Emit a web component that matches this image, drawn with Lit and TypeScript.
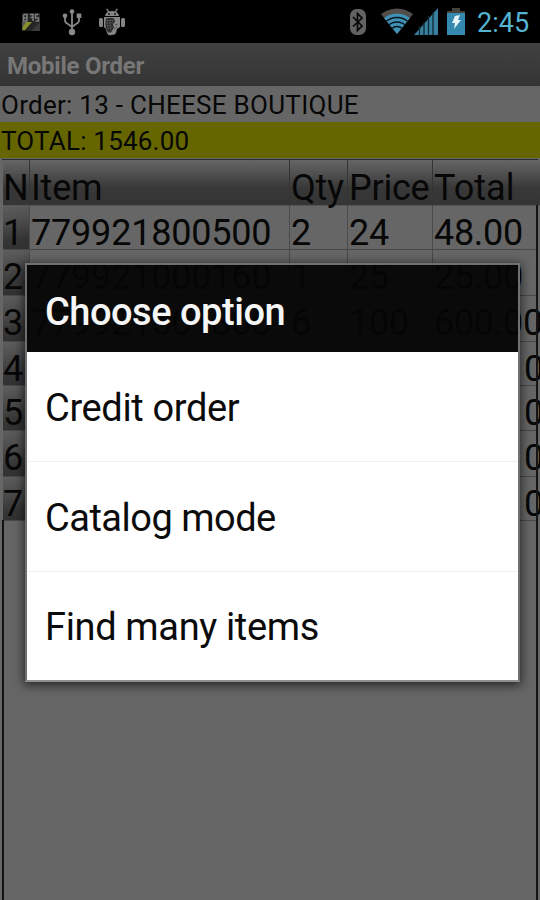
import { LitElement, html, css } from "lit";
import { customElement } from "lit/decorators.js";

interface Row { n: string; item: string; qty: string; price: string; total: string; tail?: boolean }

const ROWS: Row[] = [
  { n: "1", item: "779921800500", qty: "2", price: "24", total: "48.00" },
  { n: "2", item: "779921000160", qty: "1", price: "25", total: "25.00" },
  { n: "3", item: "779921501800", qty: "6", price: "100", total: "600.00" },
  { n: "4", item: "", qty: "", price: "", total: "0", tail: true },
  { n: "5", item: "", qty: "", price: "", total: "0", tail: true },
  { n: "6", item: "", qty: "", price: "", total: "0", tail: true },
  { n: "7", item: "", qty: "", price: "", total: "0", tail: true },
];

@customElement("status-bar")
class StatusBar extends LitElement {
  static styles = css`
    :host { display: flex; height: 43px; background: #000; align-items: center; box-sizing: border-box; }
    svg { display: block; flex: none; }
    .note { margin-left: 21px; }
    .usb { margin-left: 21px; }
    .bot { margin-left: 17px; }
    .gap { flex: 1; }
    .wifi { margin-left: 13px; }
    .cell { margin-left: 0; }
    .batt { margin-left: 9px; }
    .time { font: 27px/43px Roboto, sans-serif; color: #54b4d3; width: 53px; margin: 3px 10px 0 12px; white-space: nowrap; }
  `;
  render() {
    return html`
      <svg class="note" width="20" height="20" viewBox="0 0 20 20">
        <rect x="1" y="1" width="18" height="18" fill="#252525"/>
        <path d="M10 19l9-9v9z" fill="#3a3a3a"/>
        <path d="M3 10h8l-7 8H1z" fill="#87902d"/><path d="M1 10h4l-4 6z" fill="#555"/>
        <path d="M2.500 2.500v6.500h3.500V6H3M3 2.500h3V6M9 2.500h3V9M12 5.500H9.500M17.500 2.500h-3v3.500h3V9h-3" fill="none" stroke="#7c7c7c" stroke-width="1.500"/>
      </svg>
      <svg class="usb" width="20" height="28" viewBox="0 0 20 28">
        <g fill="none" stroke="#8a8a8a" stroke-width="1.800"><path d="M10 4v20M3 8v4q0 3 3 4l4 3M17 8v4q0 3-3 4l-4 3"/></g>
        <g fill="#8a8a8a"><circle cx="10" cy="3.500" r="2.300"/><circle cx="10" cy="24" r="3.200"/><circle cx="3" cy="7.800" r="2.300"/><rect x="14.700" y="5.500" width="4.600" height="4.500"/></g>
      </svg>
      <svg class="bot" width="26" height="28" viewBox="0 0 26 28">
        <g fill="#858585">
          <path d="M6 8q1-5 7-5t7 5zM7 1l1.200-.6 2 3-1.200.8zM19 1l-1.200-.6-2 3 1.200.8z"/>
          <rect x="0" y="10" width="4" height="9" rx="1.500"/><rect x="22" y="10" width="4" height="9" rx="1.500"/>
          <path d="M5 9h16v10l-3 2-1 4q-1 2-4 2-4 1-5-2l-1-4-2-2z"/>
        </g>
        <path d="M7 10.500q5-1.500 8 0l1 3-2 3 1 3-3 5H9q-4-6-2-14z" fill="#303030"/>
        <path d="M8 12.500h6M7.500 15h6M8 17.500h5M8.500 20h4" stroke="#707070" stroke-dasharray="1.300 1.300"/>
        <path d="M16 17l3-1M15 21l3-2" stroke="#555"/>
        <circle cx="10" cy="6" r=".9" fill="#111"/><circle cx="16" cy="6" r=".9" fill="#111"/>
      </svg>
      <span class="gap"></span>
      <svg width="18" height="26" viewBox="0 0 18 26">
        <rect x="1" y="0" width="16" height="26" rx="6.500" fill="#626262"/>
        <path d="M4 8l9 9-4.500 4.500v-17L13 9l-9 8.500" fill="none" stroke="#050505" stroke-width="1.700"/>
      </svg>
      <svg class="wifi" width="34" height="27" viewBox="0 0 34 27">
        <defs><clipPath id="fan"><path d="M17 26L0 5Q17-5 34 5z"/></clipPath></defs>
        <g clip-path="url(#fan)">
          <circle cx="17" cy="26" r="25.500" fill="#514d49"/><circle cx="17" cy="26" r="20.500" fill="#3f91b5"/>
          <g fill="none" stroke="#06151b" stroke-width="1.300"><circle cx="17" cy="26" r="16.500"/><circle cx="17" cy="26" r="12"/><circle cx="17" cy="26" r="7.500"/></g>
        </g>
      </svg>
      <svg class="cell" width="24" height="27" viewBox="0 0 24 27">
        <path d="M24 0v27H0z" fill="#397f9e"/>
        <path d="M5.500 18v9M10 14v13M14.500 8v19M19 4v23" stroke="#0b2834" stroke-width="1.300"/>
      </svg>
      <svg class="batt" width="18" height="27" viewBox="0 0 18 27">
        <path d="M5 0h8v3h5v4H0V3h5z" fill="#45413b"/><rect y="5" width="18" height="22" fill="#3689ae"/>
        <path d="M8 8l5-1-2 5h3l-7 9 1-6H5z" fill="#e4f4f8"/>
      </svg>
      <span class="time">2:45</span>`;
  }
}

@customElement("order-table")
class OrderTable extends LitElement {
  static styles = css`
    :host { display: flex; flex-direction: column; flex: 1; margin: 1px 0 0 2px; width: 536px; box-sizing: border-box;
      border-top: 1px solid #2b2b2b; font: 36px/44px Roboto, sans-serif; color: #070707; }
    .grid { display: grid; grid-template-columns: 27px 260px 58px 85px 104px;
      grid-template-rows: 46px 44px 46px 46px 44px 45px 46px 44px; margin-left: 1px; }
    .c { border-right: 1px solid #4a4a4a; border-bottom: 1px solid #484848; box-sizing: border-box; white-space: nowrap;
      padding-left: 1px; line-height: 54px; min-width: 0; letter-spacing: -.25px; }
    .t { border-right: 0; letter-spacing: -.3px; }
    .h { background: linear-gradient(#656565 0, #565656 22%, #383838 62%, #353535 100%); line-height: 56px; border-bottom-color: #555; border-right-color: #343434; }
    .h.t { margin-right: -3px; letter-spacing: 0; }
    .n { background: linear-gradient(170deg, #5e5e5e 0, #4a4a4a 40%, #353535 75%, #303030 100%); padding-left: 0; }
    .n.h { background: linear-gradient(#656565 0, #565656 22%, #383838 62%, #353535 100%); }
    .item { letter-spacing: -.2px; }
    .tail { padding-left: 91px; }
  `;
  render() {
    return html`<div class="grid">
      <div class="c h n">N</div><div class="c h item">Item</div><div class="c h">Qty</div><div class="c h">Price</div><div class="c h t">Total</div>
      ${ROWS.map(r => html`<div class="c n">${r.n}</div><div class="c item">${r.item}</div><div class="c">${r.qty}</div><div class="c">${r.price}</div><div class="c t ${r.tail ? "tail" : ""}">${r.total}</div>`)}
    </div>`;
  }
}

@customElement("option-dialog")
class OptionDialog extends LitElement {
  static styles = css`
    :host { display: block; box-sizing: border-box; border: 2px solid #707070; border-bottom-color: #909090;
      box-shadow: 0 2px 10px 1px rgba(0,0,0,.65); font: 38px Roboto, sans-serif; }
    .title { height: 87px; line-height: 94px; padding-left: 18px; background: rgba(5,5,5,.945); color: #f6f6f6; font-weight: 500; letter-spacing: -.48px; box-sizing: border-box; }
    .list { background: #fff; }
    .opt { height: 110px; line-height: 113px; box-sizing: border-box; padding-left: 18px; color: #0b0b0b; letter-spacing: -.35px; border-bottom: 1px solid #f0f0f0; }
    .opt:nth-child(2) { line-height: 112px; letter-spacing: -.5px; }
    .opt:last-child { border: 0; height: 108px; line-height: 110px; }
  `;
  render() {
    return html`<div class="title"><span>Choose option</span></div>
      <div class="list">${["Credit order", "Catalog mode", "Find many items"].map(o => html`<div class="opt">${o}</div>`)}</div>`;
  }
}

@customElement("app-root")
class AppRoot extends LitElement {
  static styles = css`
    :host { display: flex; flex-direction: column; position: relative; width: 540px; height: 900px; overflow: hidden; background: #666; font-family: Roboto, sans-serif; }
    .bar { height: 43px; box-sizing: border-box; background: linear-gradient(#414141, #343434); color: #777; font-size: 24px; font-weight: 700; letter-spacing: -.25px; line-height: 46px; padding-left: 7px; flex: none; }
    .line { height: 36px; line-height: 38px; font-size: 26px; letter-spacing: .27px; color: #070707; padding-left: 1px; flex: none; white-space: nowrap; }
    .sum { background: #666600; letter-spacing: .2px; }
    .dlg { position: absolute; left: 25px; top: 263px; width: 495px; }
    .edges { position: absolute; inset: 205px 2px 0 3px; border-right: 2px solid #151515; }
    .left { position: absolute; left: 2px; top: 520px; bottom: 0; width: 2px; background: #121212; }
  `;
  render() {
    return html`<status-bar></status-bar>
      <div class="bar">Mobile Order</div>
      <div class="line">Order: 13 - CHEESE BOUTIQUE</div>
      <div class="line sum">TOTAL: 1546.00</div>
      <order-table></order-table>
      <div class="edges"></div><div class="left"></div>
      <option-dialog class="dlg"></option-dialog>`;
  }
}
